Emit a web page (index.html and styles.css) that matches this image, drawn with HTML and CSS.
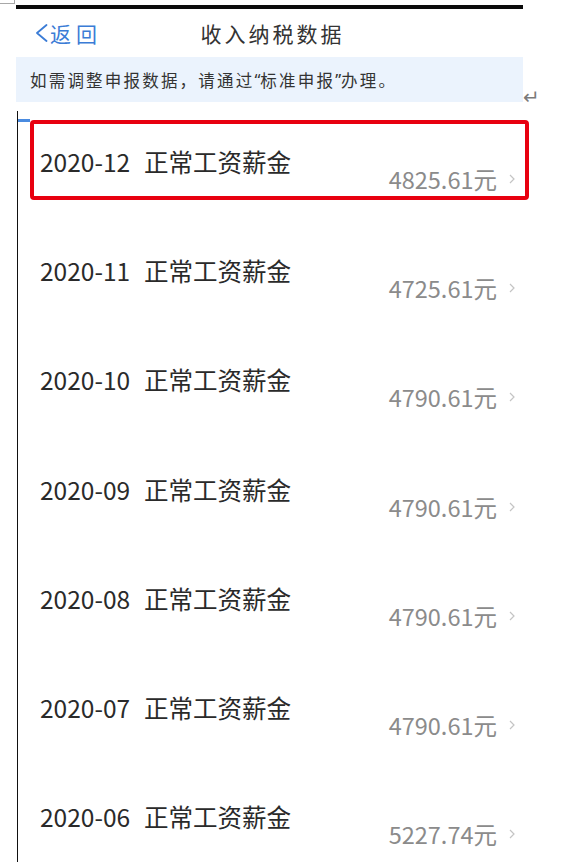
FILE: index.html
```html
<!DOCTYPE html>
<html lang="zh-CN">
<head>
<meta charset="utf-8">
<title>收入纳税数据</title>
<link rel="stylesheet" href="styles.css">
</head>
<body>
<div class="corner"></div>
<div class="topbar"></div>
<header class="nav">
  <a class="back">
    <svg class="back-icon" width="13" height="18" viewBox="0 0 13 18"><polyline points="11.5,1 2,9 11.5,17" fill="none" stroke="#3b7cd6" stroke-width="1.8" stroke-linecap="round" stroke-linejoin="round"/></svg>
    <span>返回</span>
  </a>
  <h1 class="title">收入纳税数据</h1>
  <span></span>
</header>
<div class="notice-row">
  <div class="notice">如需调整申报数据，请通过<span class="q">“</span>标准申报<span class="q">”</span>办理。</div>
  <span class="return-mark">↵</span>
</div>
<div class="list">
  <div class="row">
    <span class="tick active"></span>
    <div class="item selected">
      <div class="name"><span class="date">2020-12</span><span class="label">正常工资薪金</span></div>
      <div class="amount"><span>4825.61元</span><svg class="chev" width="6" height="10" viewBox="0 0 6 10"><polyline points="1,1 5,5 1,9" fill="none" stroke="#c4c4c4" stroke-width="1.2"/></svg></div>
    </div>
  </div>
  <div class="row">
    <span class="tick"></span>
    <div class="item">
      <div class="name"><span class="date">2020-11</span><span class="label">正常工资薪金</span></div>
      <div class="amount"><span>4725.61元</span><svg class="chev" width="6" height="10" viewBox="0 0 6 10"><polyline points="1,1 5,5 1,9" fill="none" stroke="#c4c4c4" stroke-width="1.2"/></svg></div>
    </div>
  </div>
  <div class="row">
    <span class="tick"></span>
    <div class="item">
      <div class="name"><span class="date">2020-10</span><span class="label">正常工资薪金</span></div>
      <div class="amount"><span>4790.61元</span><svg class="chev" width="6" height="10" viewBox="0 0 6 10"><polyline points="1,1 5,5 1,9" fill="none" stroke="#c4c4c4" stroke-width="1.2"/></svg></div>
    </div>
  </div>
  <div class="row">
    <span class="tick"></span>
    <div class="item">
      <div class="name"><span class="date">2020-09</span><span class="label">正常工资薪金</span></div>
      <div class="amount"><span>4790.61元</span><svg class="chev" width="6" height="10" viewBox="0 0 6 10"><polyline points="1,1 5,5 1,9" fill="none" stroke="#c4c4c4" stroke-width="1.2"/></svg></div>
    </div>
  </div>
  <div class="row">
    <span class="tick"></span>
    <div class="item">
      <div class="name"><span class="date">2020-08</span><span class="label">正常工资薪金</span></div>
      <div class="amount"><span>4790.61元</span><svg class="chev" width="6" height="10" viewBox="0 0 6 10"><polyline points="1,1 5,5 1,9" fill="none" stroke="#c4c4c4" stroke-width="1.2"/></svg></div>
    </div>
  </div>
  <div class="row">
    <span class="tick"></span>
    <div class="item">
      <div class="name"><span class="date">2020-07</span><span class="label">正常工资薪金</span></div>
      <div class="amount"><span>4790.61元</span><svg class="chev" width="6" height="10" viewBox="0 0 6 10"><polyline points="1,1 5,5 1,9" fill="none" stroke="#c4c4c4" stroke-width="1.2"/></svg></div>
    </div>
  </div>
  <div class="row">
    <span class="tick"></span>
    <div class="item">
      <div class="name"><span class="date">2020-06</span><span class="label">正常工资薪金</span></div>
      <div class="amount"><span>5227.74元</span><svg class="chev" width="6" height="10" viewBox="0 0 6 10"><polyline points="1,1 5,5 1,9" fill="none" stroke="#c4c4c4" stroke-width="1.2"/></svg></div>
    </div>
  </div>
</div>
</body>
</html>
```

FILE: styles.css
```css
html, body {
  margin: 0;
  height: 862px;
  overflow: hidden;
  background: #ffffff;
}
body {
  width: 565px;
  font-family: "Noto Sans CJK SC", "Noto Sans", sans-serif;
}
.corner {
  width: 15px;
  height: 4px;
  margin-bottom: 1px;
  box-sizing: border-box;
  border-right: 1px solid #a8a8a8;
  border-bottom: 1px solid #a8a8a8;
}
.topbar {
  margin-left: 16px;
  width: 507px;
  height: 4px;
  background: #0b0b0b;
}
.nav {
  margin-left: 16px;
  width: 507px;
  height: 48px;
  display: grid;
  grid-template-columns: 1fr auto 1fr;
  align-items: center;
}
.back {
  display: flex;
  align-items: center;
  padding-left: 19px;
  color: #3b7cd6;
  font-size: 21px;
  letter-spacing: 5px;
  line-height: 28px;
}
.back-icon {
  margin-right: 2px;
}
.title {
  margin: 0;
  padding-left: 6px;
  font-size: 21px;
  font-weight: 400;
  letter-spacing: 3px;
  line-height: 28px;
  color: #333333;
}
.notice-row {
  display: flex;
  align-items: flex-end;
  margin-left: 16px;
}
.notice {
  width: 507px;
  height: 45px;
  box-sizing: border-box;
  padding-left: 14px;
  display: flex;
  align-items: center;
  background: #ebf3fd;
  font-size: 16.5px;
  letter-spacing: 2.2px;
  color: #333333;
  white-space: nowrap;
}
.q {
  font-family: "Noto Sans", sans-serif;
  letter-spacing: 0;
}
.return-mark {
  margin-left: 0;
  margin-bottom: -4px;
  font-family: "DejaVu Sans", sans-serif;
  font-size: 20px;
  line-height: 18px;
  color: #7a7a7a;
}
.list {
  margin-left: 17px;
  margin-top: 9px;
  padding-top: 9px;
  border-left: 1px solid #111111;
}
.row {
  display: flex;
  align-items: flex-start;
  height: 109.2px;
}
.tick {
  width: 12px;
  height: 3px;
  margin-top: -1px;
}
.tick.active {
  background: #4a8be0;
}
.item {
  width: 499px;
  height: 80px;
  box-sizing: border-box;
  border: 4px solid transparent;
  border-radius: 4px;
  padding: 0 10px 0 6px;
  display: flex;
  justify-content: space-between;
  align-items: flex-start;
}
.item.selected {
  border-color: #e8000f;
}
.name {
  margin-top: 23px;
  font-size: 24.5px;
  line-height: 30px;
  color: #2a2a2a;
}
.label {
  margin-left: 14px;
}
.amount {
  margin-top: 41px;
  display: flex;
  align-items: center;
  font-size: 23.5px;
  line-height: 28px;
  color: #8b8b8b;
}
.chev {
  margin-left: 12px;
}
```
